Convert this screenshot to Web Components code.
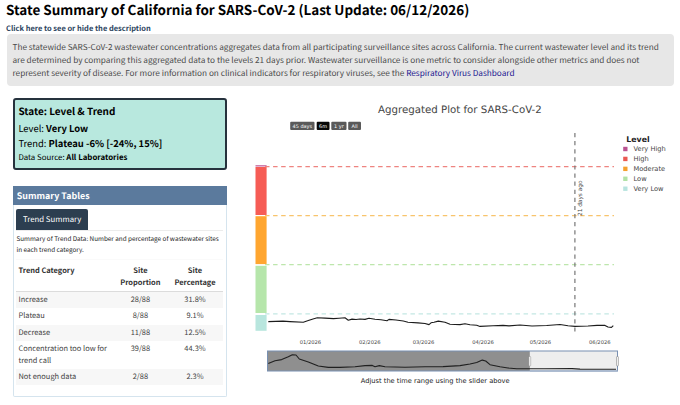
<!DOCTYPE html>
<html lang="en">
<head>
<meta charset="utf-8">
<title>State Summary</title>
<style>
html,body{margin:0;background:#fff}
body{font-family:"Noto Sans CJK SC","Noto Sans",sans-serif;color:#000;text-rendering:geometricPrecision;overflow:hidden}
</style>
</head>
<body>
<summary-page></summary-page>
<script>
const define = (name, html) => customElements.define(name, class extends HTMLElement {
  connectedCallback() {
    const t = document.createElement('template');
    t.innerHTML = html;
    this.attachShadow({mode: 'open'}).append(t.content.cloneNode(true));
  }
});

define('page-heading', `
<style>
:host{display:block;padding:0 0 0 6px;height:33px;box-sizing:border-box;white-space:nowrap}
h1{margin:0;font-size:13.48px;line-height:18px;font-weight:700}
a{display:block;margin-top:3.5px;font-size:7.48px;line-height:13px;font-weight:700;color:#2c4560}
</style>
<h1><slot></slot></h1><a><slot name="toggle"></slot></a>`);

define('description-box', `
<style>
:host{display:block;box-sizing:border-box;margin:1px 6px 0 6.5px;height:51.5px;padding:7px 6px 0;border-radius:4px;background:#e7e7e7;color:#4b4b4b;font-size:8.21px;line-height:13.2px;white-space:nowrap}
::slotted(a){color:#1b1690;text-decoration:none}
</style>
<slot></slot>`);

define('status-card', `
<style>
:host{display:block;box-sizing:border-box;height:71.5px;border:2px solid #26323d;border-radius:3px;background:#b8e8de;padding:4px 3.7px;font-size:9.42px;white-space:nowrap}
h2{margin:0;font-size:9.95px;line-height:14px}
.rows{display:flex;flex-direction:column;padding-top:2.6px}
.rows>*{line-height:15px}
::slotted([slot=source]){font-size:7.86px;line-height:12px;margin-top:1.2px}
</style>
<h2><slot name="title"></slot></h2>
<div class="rows"><div><slot name="level"></slot></div><div><slot name="trend"></slot></div><slot name="source"></slot></div>`);

define('summary-panel', `
<style>
:host{display:flex;flex-direction:column;box-sizing:border-box;height:211.5px;border:1.5px solid #d5e4ee;border-top:0;border-radius:0 0 2px 2px}
header{background:#5b7a9d;color:#fff;font-weight:700;font-size:8.89px;line-height:19px;height:19px;padding-left:4px;margin:0 -1px;flex:none}
.body{padding:4.6px 3px 0 2.8px}
.tabs{display:flex;border-bottom:1px solid #ececec}
.tab{background:#2c3e50;color:#fff;font-size:7.81px;line-height:21px;padding:0 6.5px;border-radius:2px 2px 0 0;white-space:nowrap}
p{margin:3.4px 0 0;font-size:6.35px;line-height:10.2px;color:#1c1c1c;white-space:nowrap}
</style>
<header><slot name="title"></slot></header>
<div class="body"><div class="tabs"><div class="tab"><slot name="tab"></slot></div></div><p><slot name="note"></slot></p><slot></slot></div>`);

customElements.define('trend-table', class extends HTMLElement {
  connectedCallback() {
    const rows = [
      ['Increase', '28/88', '31.8%'],
      ['Plateau', '8/88', '9.1%'],
      ['Decrease', '11/88', '12.5%'],
      ['Concentration too low for<br>trend call', '39/88', '44.3%'],
      ['Not enough data', '2/88', '2.3%']
    ];
    this.attachShadow({mode: 'open'}).innerHTML = `
<style>
:host{display:block;margin-top:4px;font-size:7.44px;line-height:11.9px;color:#444;border-top:1px solid #fafafa;padding-top:4px}
.r{display:grid;grid-template-columns:96.3px 55.2px 54px;padding:2.1px 0 2.25px;white-space:nowrap}
.r>*{text-align:center}
.r>:first-child{text-align:left;padding-left:2px}
.h{font-weight:700;color:#333;border-bottom:1px solid #dcdcdc;padding:1.3px 0 2px}
.r:nth-child(odd):not(.h){background:#f7f7f7}
</style>
<div class="r h"><span>Trend Category</span><span>Site<br>Proportion</span><span>Site<br>Percentage</span></div>
<div>${rows.map(r => `<div class="r">${r.map(c => `<span>${c}</span>`).join('')}</div>`).join('')}</div>`;
  }
});

customElements.define('level-plot', class extends HTMLElement {
  connectedCallback() {
    const buttons = [[290.2, 24.3, '45 days'], [316.7, 12.8, '6m'], [331.3, 15.2, '1 yr'], [348.2, 12.8, 'All']]
      .map(([x, w, t], i) => `<rect x="${x}" y="121.8" width="${w}" height="8.2" rx="1" fill="${i === 1 ? '#080808' : '#5a5a5a'}"/><text x="${x + w / 2}" y="127.7" text-anchor="middle" font-size="4.94" fill="#fff">${t}</text>`).join('');
    const bands = [[165, 1.6, '#cf7fae'], [167, 48, '#f65c55'], [216.2, 47.9, '#ffa630'], [265.8, 47.2, '#b6e6ab'], [315, 15.8, '#b8e6de']]
      .map(([y, h, c]) => `<rect x="255.5" y="${y}" width="11.1" height="${h}" fill="${c}"/>`).join('');
    const lines = [[166.7, '#ee8480'], [215.7, '#f8c46c'], [264.6, '#bde6ac'], [313.8, '#c4e8e4']]
      .map(([y, c]) => `<path d="M265 ${y}H614" stroke="${c}" stroke-width="1.2" stroke-dasharray="4.5 3.58"/>`).join('');
    const legend = [['Very High', '#bb5391'], ['High', '#ea5952'], ['Moderate', '#f5a02e'], ['Low', '#b2e2a6'], ['Very Low', '#b8e4df']]
      .map(([t, c], i) => `<rect x="623.2" y="${146.8 + i * 9.93}" width="4.3" height="4.4" fill="${c}"/><text x="633.5" y="${151.4 + i * 9.93}" font-size="6.66" fill="#444">${t}</text>`).join('');
    const dates = [[310.4, '01/2026'], [369.8, '02/2026'], [423.5, '03/2026'], [483, '04/2026'], [540.4, '05/2026'], [599.8, '06/2026']]
      .map(([x, t]) => `<text x="${x}" y="343.5" text-anchor="middle" font-size="5.18" fill="#444">${t}</text>`).join('');
    this.attachShadow({mode: 'open'}).innerHTML = `
<style>:host{display:block}svg{display:block;font-family:"DejaVu Sans",sans-serif}</style>
<svg width="440" height="310" viewBox="240 90 440 310" fill="none">
<text x="378" y="113" font-size="10.22" fill="#444">Aggregated Plot for SARS-CoV-2</text>
${buttons}${bands}${lines}
<path d="M574.9 133V332" stroke="#777" stroke-width="1.2" stroke-dasharray="4.2 3.9"/>
<text transform="translate(582.1 216) rotate(-90)" font-size="5.79" fill="#444">21 days ago</text>
<text x="626.3" y="142.2" font-size="7.8" font-weight="700" fill="#222">Level</text>
${legend}
<path stroke="#1c1c1c" stroke-width="1.1" stroke-linejoin="round" d="M268.3 321.6L283 321.1L290 321.6L303.3 322.3L308.3 320.6L313 319L317.3 317.8L325 318.1L333.5 318.6L339 318.2L345 317.8L348.3 320.2L352 319.1L356 319.5L360 319L365 319.4L369 318.3L375 319.3L381 319.8L387 320.8L389 319.4L396 320L403.3 321L408 322.2L418 322.9L425 323.5L429 324.6L431 322.8L434 322.3L438.3 321.1L445 322.3L450 324.2L460 324.6L465 323.7L470 324.8L476.7 325.3L480 326.4L493 325.7L503 325.4L509 325.9L520 325L532 326L546.7 325.5L560 324.5L568 325.7L575 326.4L588 326L597 325.4L605 325.4L608 327L611.5 327.4L613.3 325.7"/>
${dates}
<rect x="267.5" y="351" width="350" height="20" fill="#eee" />
<rect x="267.5" y="351" width="262.3" height="20" fill="#8f8f8f"/>
<rect x="267.5" y="351" width="350" height="20" stroke="#7890b2" stroke-width="1"/>
<path d="M530 371H617.5" stroke="#a9b8cf" stroke-width="1.6"/>
<path stroke="#202020" stroke-width="1.1" stroke-linejoin="round" d="M268.3 363.6L275 360.8L281.7 359.6L288.3 356.8L292.3 354.8L296 355L299.3 359L308.3 362L318.3 366L328.3 367.4L340 367.4L355 366.7L365 365.6L372.3 365.4L375 366.7L379.3 365.6L385 366.8L405 367.3L425 366.7L443 366.6L460 365.6L470 364L476.7 362.5L482.3 360.1L485.7 361L490 364.7L500 366.7L508 368L516.7 368.7L545 368.8L572 368.6L580 369.1L616 369.2"/>
<rect x="528.9" y="356.5" width="1.8" height="9.4" rx=".6" fill="#fff" stroke="#888" stroke-width=".5"/>
<rect x="616.6" y="356.5" width="1.8" height="9.4" rx=".6" fill="#fff" stroke="#666" stroke-width=".5"/>
<text x="360.8" y="383.2" font-size="6.68" fill="#222">Adjust the time range using the slider above</text>
</svg>`;
  }
});

define('summary-page', `
<style>
:host{display:block;width:680px;height:405px;overflow:hidden}
main{display:grid;grid-template-columns:214.3px 440px;column-gap:13px;padding-left:12.7px}
.side{display:flex;flex-direction:column;gap:16px;padding-top:12.5px}
.plot{padding-top:4.5px}
</style>
<page-heading>State Summary of California for SARS-CoV-2 (Last Update: 06/12/2026)<span slot="toggle">Click here to see or hide the description</span></page-heading>
<description-box>The statewide SARS-CoV-2 wastewater concentrations aggregates data from all participating surveillance sites across California. The current wastewater level and its trend<br>are determined by comparing this aggregated data to the levels 21 days prior. Wastewater surveillance is one metric to consider alongside other metrics and does not<br>represent severity of disease. For more information on clinical indicators for respiratory viruses, see the <a>Respiratory Virus Dashboard</a></description-box>
<main>
<div class="side">
<status-card><span slot="title">State: Level &amp; Trend</span><span slot="level">Level: <b>Very Low</b></span><span slot="trend">Trend: <b>Plateau -6% [-24%, 15%]</b></span><span slot="source">Data Source: <b>All Laboratories</b></span></status-card>
<summary-panel><span slot="title">Summary Tables</span><span slot="tab">Trend Summary</span><span slot="note">Summary of Trend Data: Number and percentage of wastewater sites<br>in each trend category.</span><trend-table></trend-table></summary-panel>
</div>
<div class="plot"><level-plot></level-plot></div>
</main>`);
</script>
</body>
</html>
